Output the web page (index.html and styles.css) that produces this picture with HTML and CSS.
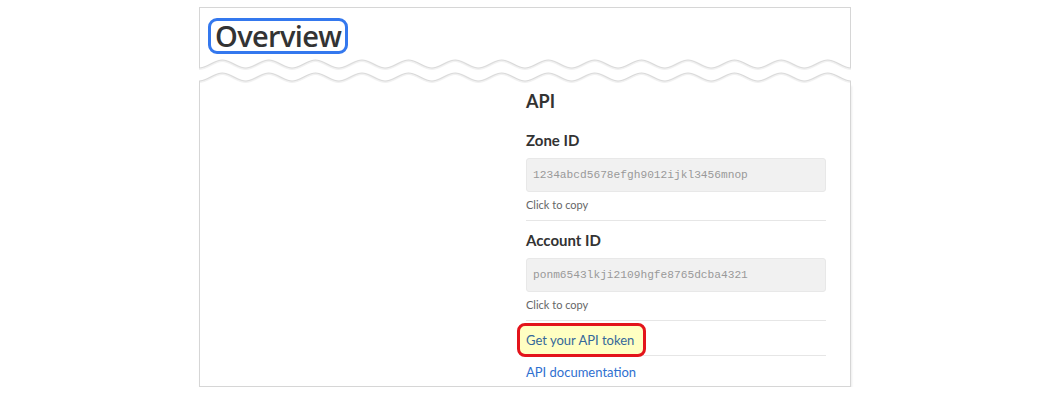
FILE: index.html
```html
<!DOCTYPE html>
<html>
<head>
    <meta charset="UTF-8" />
    <meta name="viewport" content="width=device-width, initial-scale=1.0">
    <title>Overview</title>
    <link rel="stylesheet" href="styles.css">
</head>

<body>
    <div class="frame">
        <div class="header-card">
            <h1 class="page-title">Overview</h1>
        </div>

        <svg class="tear" width="652" height="26" viewBox="0 0 652 26">
            <defs>
                <pattern id="wave" patternUnits="userSpaceOnUse" width="46.571" height="26">
                    <path d="M0 11 C8.4 11 14.9 3 23.29 3 S38.2 11 46.571 11" fill="none" stroke="#f1f1f1" stroke-width="2" />
                    <path d="M0 10 C8.4 10 14.9 2 23.29 2 S38.2 10 46.571 10" fill="none" stroke="#d8d8d8" stroke-width="1.1" />
                    <path d="M0 24 C8.4 24 14.9 16 23.29 16 S38.2 24 46.571 24" fill="none" stroke="#f1f1f1" stroke-width="2" />
                    <path d="M0 23 C8.4 23 14.9 15 23.29 15 S38.2 23 46.571 23" fill="none" stroke="#d8d8d8" stroke-width="1.1" />
                </pattern>
            </defs>
            <rect x="0" y="0" width="652" height="26" fill="url(#wave)" />
            <line x1="0.5" y1="0" x2="0.5" y2="10" stroke="#d6d6d6" />
            <line x1="651.5" y1="0" x2="651.5" y2="10" stroke="#d6d6d6" />
            <line x1="0.5" y1="23" x2="0.5" y2="26" stroke="#d6d6d6" />
            <line x1="651.5" y1="23" x2="651.5" y2="26" stroke="#d6d6d6" />
        </svg>

        <div class="main-card">
            <div class="side-col"></div>
            <div class="api-col">
                <h2 class="api-title">API</h2>

                <div class="id-field">
                    <div class="id-label">Zone ID</div>
                    <div class="id-box">1234abcd5678efgh9012ijkl3456mnop</div>
                    <div class="id-hint">Click to copy</div>
                </div>

                <div class="id-field">
                    <div class="id-label">Account ID</div>
                    <div class="id-box">ponm6543lkji2109hgfe8765dcba4321</div>
                    <div class="id-hint">Click to copy</div>
                </div>

                <div class="link-row">
                    <a class="token-link" href="#">Get your API token</a>
                </div>
                <div class="link-row docs">
                    <a class="docs-link" href="#">API documentation</a>
                </div>
            </div>
        </div>
    </div>
</body>
</html>
```

FILE: styles.css
```css
* {
    margin: 0;
    padding: 0;
    box-sizing: border-box;
}

body {
    background: #fff;
    font-family: "Lato", "Open Sans", sans-serif;
    color: #333;
}

.frame {
    width: 652px;
    margin: 7px auto 0;
}

.header-card {
    height: 51px;
    border: 1px solid #d6d6d6;
    border-bottom: none;
    padding: 10px 0 0 8px;
}

.page-title {
    display: inline-block;
    border: 3px solid #3478ee;
    border-radius: 9px;
    padding: 0 4px 0 4px;
    font-family: "Open Sans", sans-serif;
    font-weight: 600;
    font-size: 29px;
    letter-spacing: -0.65px;
    line-height: 30px;
    color: #333;
}

.tear {
    display: block;
}

.main-card {
    height: 303px;
    border: 1px solid #d6d6d6;
    border-top: none;
    box-shadow: 1px 2px 2px rgba(0, 0, 0, 0.08);
    display: grid;
    grid-template-columns: 1fr 300px;
    padding: 5px 24px 0 24px;
}

.api-title {
    font-size: 18px;
    font-weight: 700;
    line-height: 24px;
    margin-bottom: 8px;
    color: #333;
}

.id-field {
    padding: 9px 0 7px;
    border-bottom: 1px solid #e6e6e6;
}

.id-label {
    font-size: 15px;
    font-weight: 700;
    line-height: 20px;
    color: #333;
}

.id-box {
    margin-top: 8px;
    height: 34px;
    padding: 0 6px;
    background: #f1f1f1;
    border: 1px solid #e8e8e8;
    border-radius: 3px;
    font-family: "Liberation Mono", monospace;
    font-size: 11.2px;
    line-height: 32px;
    color: #999;
}

.id-hint {
    margin-top: 5px;
    font-size: 11px;
    line-height: 16px;
    color: #666;
}

.link-row {
    padding-top: 2px;
    border-bottom: 1px solid #e6e6e6;
    height: 35px;
}

.link-row.docs {
    border-bottom: none;
    padding-top: 5px;
}

.token-link {
    position: relative;
    z-index: 1;
    display: inline-block;
    margin-left: -9px;
    padding: 5px 9px 5px 6px;
    border: 3px solid #e3141b;
    border-radius: 8px;
    background: #ffffc2;
    font-size: 13px;
    line-height: 18px;
    color: #35689a;
    text-decoration: none;
}

.docs-link {
    font-size: 13px;
    line-height: 18px;
    color: #2f70d0;
    text-decoration: none;
}
```
